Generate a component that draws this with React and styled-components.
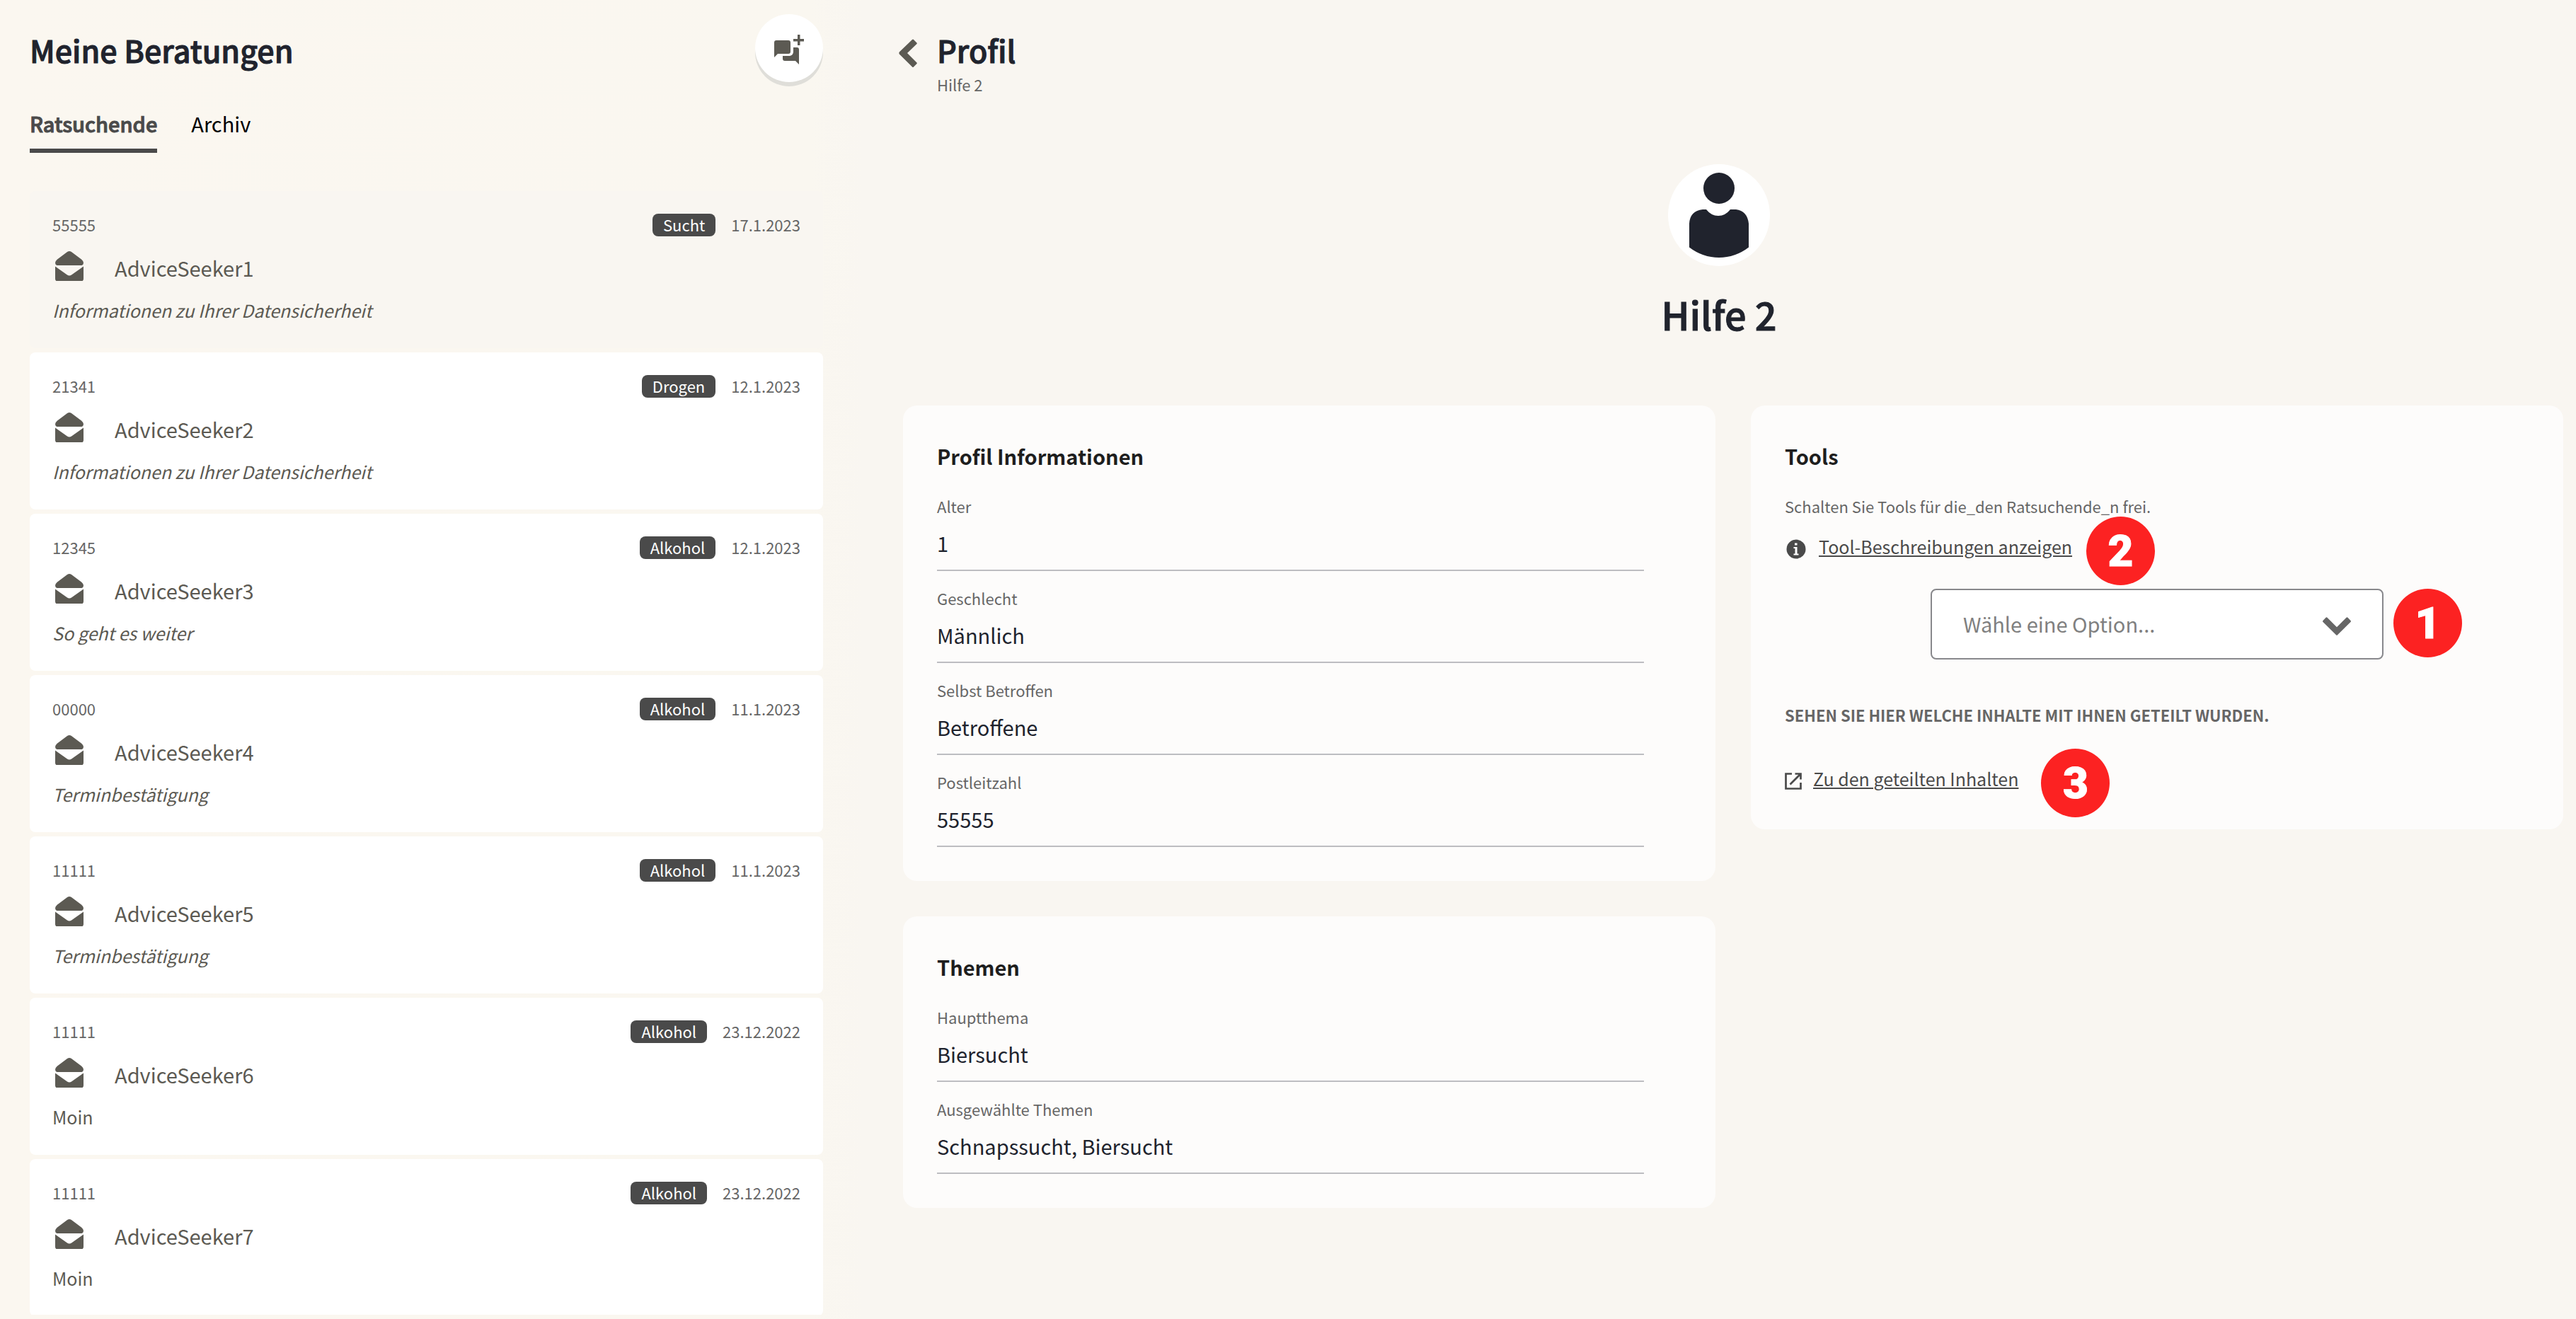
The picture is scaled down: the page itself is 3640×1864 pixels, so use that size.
import React from 'react';
import styled, { createGlobalStyle, css } from 'styled-components';

const GlobalStyle = createGlobalStyle`
  *, *::before, *::after { box-sizing: border-box; }
  body {
    margin: 0;
    background: #f9f6f1;
    color: #20232d;
    font-family: 'Noto Sans CJK SC', 'Open Sans', sans-serif;
  }
  h1, h2, h3, h4, p, ul, dl, dd { margin: 0; padding: 0; }
  ul { list-style: none; }
  button { border: 0; padding: 0; background: none; font: inherit; cursor: pointer; }
`;

/* Semibold look: the medium cut with a hairline outline in the text colour. */
const semibold = css`
  font-weight: 500;
  -webkit-text-stroke: 1px currentColor;
`;

const Layout = styled.div`
  display: flex;
  height: 100vh;
  min-height: 800px;
`;

const Sidebar = styled.aside`
  flex: 0 0 1218px;
  display: flex;
  flex-direction: column;
  background: linear-gradient(to right, #fbf7f0, #faf7f0 94%, #f9f6f1);
`;

const SidebarHeader = styled.header`
  display: flex;
  justify-content: space-between;
  align-items: flex-start;
  padding: 20px 55px 0 42px;
`;

const Title = styled.h1`
  font-size: 43px;
  line-height: 64px;
  color: #20232d;
  ${semibold}
`;

const SidebarTitle = styled(Title)`
  padding-top: 18px;
`;

const NewChatButton = styled.button`
  display: grid;
  place-items: center;
  width: 96px;
  height: 96px;
  padding-top: 4px;
  border-radius: 50%;
  background: #fff;
  box-shadow: 0 6px 0 #dfded9;
`;

const Tabs = styled.nav`
  display: flex;
  gap: 48px;
  padding: 32px 42px 54px;
`;

const Tab = styled.a`
  font-size: 29px;
  line-height: 52px;
  padding-bottom: 10px;
  color: #000;
  text-decoration: none;
  border-bottom: 6px solid transparent;
  ${(p) => p.$active && css`
    ${semibold}
    color: #4a4a4a;
    border-color: #4a4a4a;
  `}
`;

const SessionList = styled.ul`
  flex: 1;
  min-height: 0;
  overflow: hidden;
  margin-bottom: 6px;
  padding: 0 55px 0 42px;
`;

const SessionCard = styled.li`
  height: 222px;
  margin-bottom: 6px;
  padding: 32px;
  border-radius: 8px;
  background: ${(p) => (p.$active ? '#f9f6f1' : '#fff')};
  color: #5c5a53;
`;

const SessionMeta = styled.div`
  display: flex;
  align-items: flex-start;
  gap: 22px;
  font-size: 22px;
  line-height: 30px;
  color: #666;
`;

const Postcode = styled.span`
  flex: 1;
`;

const Tag = styled.span`
  padding: 0 15px 2px;
  border-radius: 8px;
  background: #4a4a4a;
  color: #fff;
`;

const SessionName = styled.div`
  display: flex;
  align-items: center;
  gap: 40px;
  margin-top: 16px;
  height: 56px;
  font-size: 29px;
  line-height: 56px;
`;

const SessionIcon = styled.span`
  display: grid;
  place-items: center;
  width: 48px;
  height: 48px;
  padding-bottom: 4px;
`;

const SessionTopic = styled.p`
  margin-top: 8px;
  font-size: 25px;
  line-height: 48px;
  font-style: ${(p) => (p.$italic ? 'italic' : 'normal')};
`;

const Main = styled.main`
  flex: 1;
  min-width: 0;
`;

const MainHeader = styled.header`
  display: flex;
  align-items: flex-start;
  gap: 28px;
  padding: 38px 52px 0;
`;

const BackLink = styled.a`
  display: flex;
  padding-top: 17px;
`;

const SubTitle = styled.p`
  font-size: 22px;
  line-height: 34px;
  color: #666;
`;

const ProfileHead = styled.section`
  display: flex;
  flex-direction: column;
  align-items: center;
  padding-top: 96px;
`;

const Avatar = styled.div`
  width: 144px;
  height: 144px;
  border-radius: 50%;
  overflow: hidden;
  background: #fff;
`;

const ProfileName = styled.h2`
  margin-top: 24px;
  font-size: 54px;
  line-height: 88px;
  color: #20232d;
  ${semibold}
`;

const Columns = styled.div`
  display: grid;
  grid-template-columns: 1fr 1fr;
  align-items: start;
  gap: 50px;
  padding: 85px 18px 50px 58px;
`;

const Column = styled.div`
  display: grid;
  gap: 50px;
`;

const Card = styled.section`
  padding: 48px;
  border-radius: 20px;
  background: #fdfcfb;
`;

const CardTitle = styled.h3`
  margin-bottom: 10px;
  font-size: 29px;
  line-height: 46px;
  font-weight: 700;
  color: #1e1e1e;
`;

const Fields = styled.dl`
  width: 95%;
`;

const Field = styled.div`
  padding: 22px 0 14px;
  border-bottom: 2px solid #bdbdc1;
`;

const FieldLabel = styled.dt`
  font-size: 22px;
  line-height: 32px;
  color: #666;
`;

const FieldValue = styled.dd`
  padding-top: 12px;
  font-size: 29px;
  line-height: 48px;
  color: #20232d;
`;

const Hint = styled.p`
  padding-top: 22px;
  font-size: 22px;
  line-height: 32px;
  color: #666;
`;

const LinkRow = styled.div`
  display: flex;
  align-items: center;
  gap: 16px;
  margin-top: ${(p) => p.$top}px;
  line-height: 48px;

  > svg { margin-top: 8px; }
`;

const TextLink = styled.a`
  font-size: 25px;
  color: #4a4a4a;
  text-decoration: underline;
  text-decoration-thickness: 2px;
  text-underline-offset: 2px;
`;

const Anchor = styled.span`
  position: relative;
  display: inline-flex;
`;

const Marker = styled.span`
  position: absolute;
  left: calc(100% + ${(p) => p.$gap}px);
  top: ${(p) => (p.$low ? 'calc(50% - 42px)' : 'calc(50% - 50px)')};
  display: grid;
  place-items: center;
  width: 97px;
  height: 97px;
  border-radius: 50%;
  background: #fc2222;
  color: #fff;
  font: 900 62px/97px Roboto, sans-serif;
  -webkit-text-stroke: 1px #fff;
`;

const SelectWrap = styled.div`
  position: relative;
  width: 640px;
  margin: 36px auto 0;
`;

const Select = styled.select`
  display: block;
  width: 100%;
  height: 100px;
  padding: 0 96px 2px 44px;
  border: 2px solid #88888c;
  border-radius: 8px;
  background: #fff;
  color: #808080;
  font: inherit;
  font-size: 29px;
  appearance: none;
`;

const SelectArrow = styled.span`
  position: absolute;
  right: 46px;
  top: 40px;
  display: flex;
  pointer-events: none;
`;

const SharedTitle = styled.h4`
  margin-top: 62px;
  font-size: 22px;
  line-height: 32px;
  font-weight: 700;
  color: #666;
  text-transform: uppercase;
`;

const EnvelopeIcon = () => (
  <svg width="40" height="42" viewBox="0 0 40 42" fill="#5c5a53" aria-hidden="true">
    <path d="M17 1Q20 -1 23 1L37 11.500Q40 14 40 16.500Q40 19 37.500 20H2.500Q0 19 0 16.500Q0 14 3 11.500Z" />
    <path d="M0 21.500 17 33.500Q20 35.500 23 33.500L40 21.500V39Q40 42.500 36.500 42.500H3.500Q0 42.500 0 39Z" />
  </svg>
);

const NewChatIcon = () => (
  <svg width="42" height="42" viewBox="0 0 42 42" fill="#5c5a53" aria-hidden="true">
    <path d="M3 8H20Q23 8 23 11V24Q23 27 20 27H5L0 32V11Q0 8 3 8Z" />
    <path d="M27 18H32Q35 18 35 21V42L30 37H15Q12 37 12 34V30H22Q27 29 27 24Z" />
    <path d="M33 0H36.500V6H42V9.500H36.500V15H33V9.500H27V6H33Z" />
  </svg>
);

const BackIcon = () => (
  <svg width="26" height="40" viewBox="0 0 26 40" fill="#5c5a53" aria-hidden="true">
    <path d="M19 1Q20 0 21 1L25.500 5.500Q26 6.500 25.500 7L12 20 25.500 33.500Q26 34.500 25.500 35L21 39.500Q20 40.500 19 39.500L.8 21.500Q0 20 .8 18.500Z" />
  </svg>
);

const ArrowDownIcon = () => (
  <svg width="40" height="26" viewBox="0 0 40 26" fill="#666" aria-hidden="true">
    <path d="M4.500 .8Q5.500 -.3 6.500 .8L20 14.300 33.500 .8Q34.500 -.3 35.500 .8L39.500 5Q40.500 6 39.500 7L21 25.300Q20 26.300 19 25.300L.5 7Q-.5 6 .5 5Z" />
  </svg>
);

const PersonIcon = () => (
  <svg width="144" height="144" viewBox="0 0 144 144" fill="#20232d" aria-hidden="true">
    <circle cx="72" cy="34" r="22" />
    <path d="M30 84Q31 66 49 64H54Q61 73 71 73Q81 73 88 64H96Q112 66 114 84V117.500Q95 132 72 132Q49 132 30 117.500Z" />
  </svg>
);

const InfoIcon = () => (
  <svg width="32" height="28" viewBox="0 0 32 28" aria-hidden="true">
    <circle cx="16" cy="14" r="13.500" fill="#4a4a4a" />
    <path fill="#fff" d="M14 5.500H17.500V8.500H14ZM12.500 11H17.500V20.500H19.500V22.500H12.500V20.500H14.500V13H12.500Z" />
  </svg>
);

const OpenIcon = () => (
  <svg width="24" height="24" viewBox="0 0 24 24" fill="none" stroke="#4a4a4a" strokeWidth="2.700" aria-hidden="true">
    <path d="M10 1.500H1.500V22.500H22.500V14M14.500 1.500H22.500V9.500M22 2 7.500 16.500" />
  </svg>
);

const sessions = [
  { id: 1, plz: '55555', tag: 'Sucht', date: '17.1.2023', name: 'AdviceSeeker1', topic: 'Informationen zu Ihrer Datensicherheit', italic: true, active: true },
  { id: 2, plz: '21341', tag: 'Drogen', date: '12.1.2023', name: 'AdviceSeeker2', topic: 'Informationen zu Ihrer Datensicherheit', italic: true },
  { id: 3, plz: '12345', tag: 'Alkohol', date: '12.1.2023', name: 'AdviceSeeker3', topic: 'So geht es weiter', italic: true },
  { id: 4, plz: '00000', tag: 'Alkohol', date: '11.1.2023', name: 'AdviceSeeker4', topic: 'Terminbestätigung', italic: true },
  { id: 5, plz: '11111', tag: 'Alkohol', date: '11.1.2023', name: 'AdviceSeeker5', topic: 'Terminbestätigung', italic: true },
  { id: 6, plz: '11111', tag: 'Alkohol', date: '23.12.2022', name: 'AdviceSeeker6', topic: 'Moin' },
  { id: 7, plz: '11111', tag: 'Alkohol', date: '23.12.2022', name: 'AdviceSeeker7', topic: 'Moin' },
];

const profileFields = [
  ['Alter', '1'],
  ['Geschlecht', 'Männlich'],
  ['Selbst Betroffen', 'Betroffene'],
  ['Postleitzahl', '55555'],
];

const topicFields = [
  ['Hauptthema', 'Biersucht'],
  ['Ausgewählte Themen', 'Schnapssucht, Biersucht'],
];

function Session({ session }) {
  return (
    <SessionCard $active={session.active}>
      <SessionMeta>
        <Postcode>{session.plz}</Postcode>
        <Tag>{session.tag}</Tag>
        <span>{session.date}</span>
      </SessionMeta>
      <SessionName>
        <SessionIcon><EnvelopeIcon /></SessionIcon>
        {session.name}
      </SessionName>
      <SessionTopic $italic={session.italic}>{session.topic}</SessionTopic>
    </SessionCard>
  );
}

function FieldCard({ title, fields }) {
  return (
    <Card>
      <CardTitle>{title}</CardTitle>
      <Fields>
        {fields.map(([label, value]) => (
          <Field key={label}>
            <FieldLabel>{label}</FieldLabel>
            <FieldValue>{value}</FieldValue>
          </Field>
        ))}
      </Fields>
    </Card>
  );
}

export default function App() {
  return (
    <>
      <GlobalStyle />
      <Layout>
        <Sidebar>
          <SidebarHeader>
            <SidebarTitle>Meine Beratungen</SidebarTitle>
            <NewChatButton type="button" aria-label="Neue Beratung">
              <NewChatIcon />
            </NewChatButton>
          </SidebarHeader>
          <Tabs>
            <Tab href="#ratsuchende" $active>Ratsuchende</Tab>
            <Tab href="#archiv">Archiv</Tab>
          </Tabs>
          <SessionList>
            {sessions.map((s) => <Session key={s.id} session={s} />)}
          </SessionList>
        </Sidebar>
        <Main>
          <MainHeader>
            <BackLink href="#zurueck" aria-label="Zurück"><BackIcon /></BackLink>
            <div>
              <Title as="h2">Profil</Title>
              <SubTitle>Hilfe 2</SubTitle>
            </div>
          </MainHeader>
          <ProfileHead>
            <Avatar><PersonIcon /></Avatar>
            <ProfileName>Hilfe 2</ProfileName>
          </ProfileHead>
          <Columns>
            <Column>
              <FieldCard title="Profil Informationen" fields={profileFields} />
              <FieldCard title="Themen" fields={topicFields} />
            </Column>
            <Card>
              <CardTitle>Tools</CardTitle>
              <Hint>Schalten Sie Tools für die_den Ratsuchende_n frei.</Hint>
              <LinkRow $top={17}>
                <InfoIcon />
                <Anchor>
                  <TextLink href="#tools">Tool-Beschreibungen anzeigen</TextLink>
                  <Marker $gap={20} $low>2</Marker>
                </Anchor>
              </LinkRow>
              <SelectWrap>
                <Select aria-label="Wähle eine Option" defaultValue="">
                  <option value="">Wähle eine Option...</option>
                </Select>
                <SelectArrow><ArrowDownIcon /></SelectArrow>
                <Marker $gap={14}>1</Marker>
              </SelectWrap>
              <SharedTitle>Sehen Sie hier welche Inhalte mit Ihnen geteilt wurden.</SharedTitle>
              <LinkRow $top={50}>
                <OpenIcon />
                <Anchor>
                  <TextLink href="#inhalte">Zu den geteilten Inhalten</TextLink>
                  <Marker $gap={32} $low>3</Marker>
                </Anchor>
              </LinkRow>
            </Card>
          </Columns>
        </Main>
      </Layout>
    </>
  );
}
